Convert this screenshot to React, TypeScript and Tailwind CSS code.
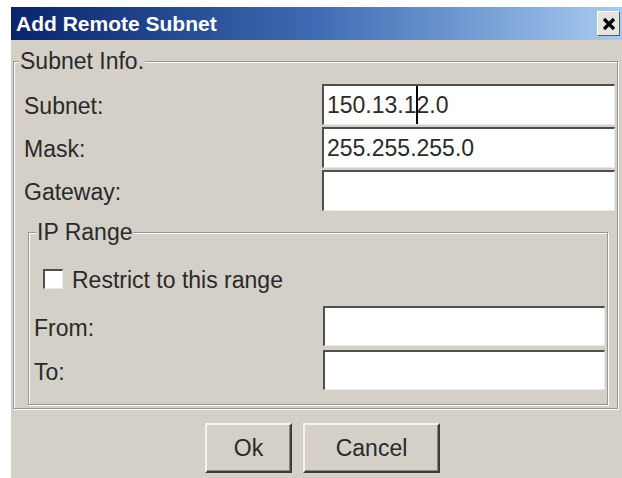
const Box = ({ className, children }: { className: string; children?: React.ReactNode }) => (
  <div
    className={`${className} flex items-center bg-white pl-[3px] border-t-2 border-l-2 border-t-[#4f4f4f] border-l-[#4f4f4f] border-b border-r border-b-[#ebe9e4] border-r-[#ebe9e4]`}
  >
    {children}
  </div>
);

const Row = ({ label, className, children }: { label: string; className: string; children?: React.ReactNode }) => (
  <div className="flex items-center justify-between">
    <span className="pt-[3px]">{label}</span>
    <Box className={className}>{children}</Box>
  </div>
);

const Button = ({ className, children }: { className: string; children: React.ReactNode }) => (
  <button
    className={`${className} h-[50px] bg-[#d4d0c8] border-2 border-t-[#f4f3f0] border-l-[#f4f3f0] border-r-[#3c3c3c] border-b-[#3c3c3c] shadow-[inset_-1px_-1px_0_#8a8782]`}
  >
    {children}
  </button>
);

export default function App() {
  return (
    <div className="h-[478px] w-[622px] overflow-hidden bg-white pl-[11px] pt-[7px] font-['Liberation_Sans',Arial,sans-serif] text-[23px] leading-[24px] text-[#2a2a2a]">
      <div className="flex h-full flex-col bg-[#d4d0c8]">
        {/* caption bar */}
        <div className="flex h-[33px] shrink-0 items-center justify-between bg-linear-to-r from-[#0a246a] via-[#3f6cb4] to-[#a9cbf1] pl-[5px] pr-[2px]">
          <span className="text-[21px] font-bold leading-none text-white">Add Remote Subnet</span>
          <button className="flex h-[25px] w-[23px] items-center justify-center border border-t-white border-l-white border-r-[#5a5a5a] border-b-[#5a5a5a] bg-[#e6e4de]">
            <svg width="16" height="16" viewBox="0 0 16 16">
              <path d="M3 3L13 13M13 3L3 13" stroke="#000" strokeWidth="3.2" />
            </svg>
          </button>
        </div>

        <fieldset className="ml-[2px] mr-[4px] mt-[9px] border border-[#9a968f] pb-[3px] pl-[10px] pr-[2px] shadow-[inset_1px_1px_0_#fff,1px_1px_0_#fff]">
          <legend className="-ml-[5px] bg-[#d4d0c8] px-[1px]">Subnet Info.</legend>

          <div className="mt-[11px] flex flex-col gap-[2px]">
            <Row label="Subnet:" className="h-[41px] w-[293px]">
              <span>150.13.1</span>
              <span className="-mx-[1px] h-[38px] w-[2px] bg-black" />
              <span>2.0</span>
            </Row>
            <Row label="Mask:" className="h-[41px] w-[293px]">
              <span>255.255.255.0</span>
            </Row>
            <Row label="Gateway:" className="h-[41px] w-[293px]" />
          </div>

          <fieldset className="ml-[4px] mr-[7px] mt-[9px] border border-[#9a968f] pb-[14px] pl-[5px] pr-[2px] shadow-[inset_1px_1px_0_#fff,1px_1px_0_#fff]">
            <legend className="ml-[2px] bg-[#d4d0c8] px-[1px]">IP Range</legend>

            <label className="ml-[9px] mt-[22px] flex items-center gap-[9px]">
              <span className="h-[20px] w-[20px] border-t-2 border-l-2 border-t-[#4f4f4f] border-l-[#4f4f4f] border-b border-r border-b-[#ebe9e4] border-r-[#ebe9e4] bg-white" />
              <span className="pt-[2px]">Restrict to this range</span>
            </label>

            <div className="mt-[14px] flex flex-col gap-[4px]">
              <Row label="From:" className="h-[40px] w-[282px]" />
              <Row label="To:" className="h-[40px] w-[282px]" />
            </div>
          </fieldset>
        </fieldset>

        <div className="mt-[14px] flex justify-center gap-[11px] pl-[12px]">
          <Button className="w-[87px]">Ok</Button>
          <Button className="w-[137px]">Cancel</Button>
        </div>
      </div>
    </div>
  );
}
